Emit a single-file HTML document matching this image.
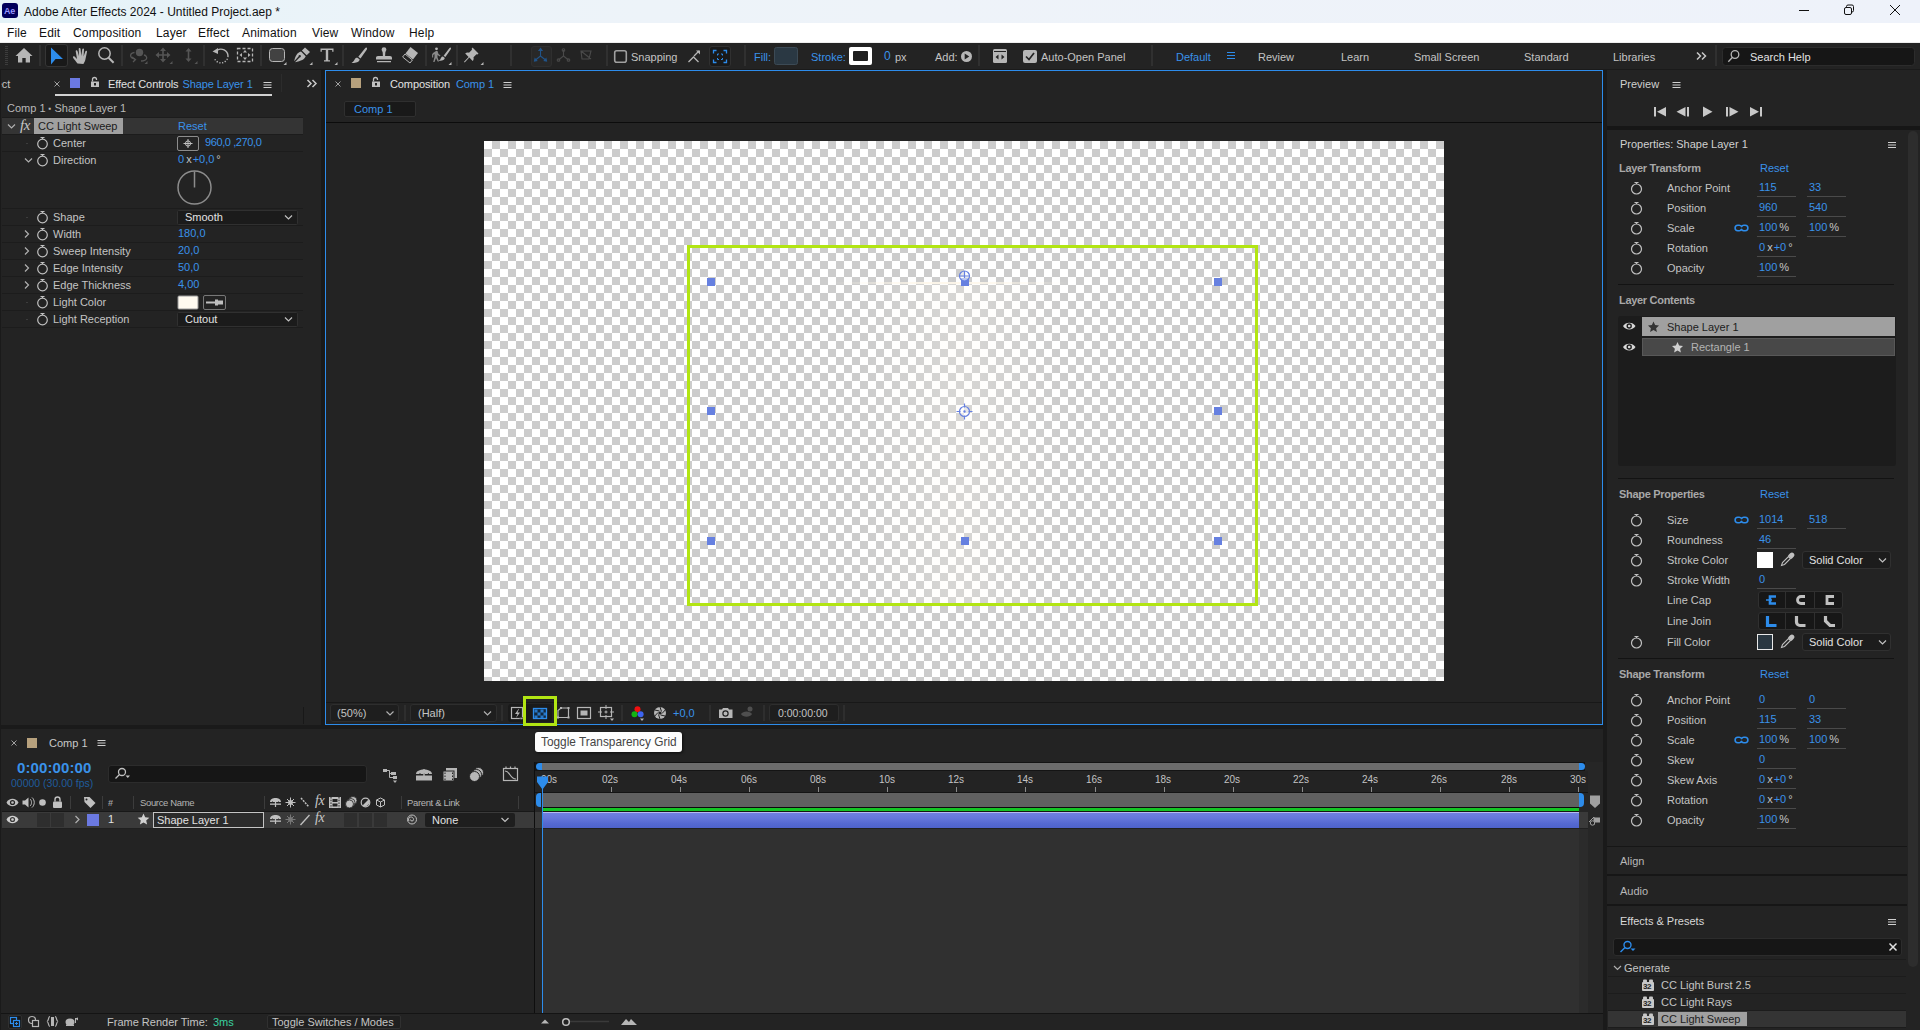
<!DOCTYPE html>
<html lang="en">
<head>
<meta charset="utf-8">
<title>Adobe After Effects 2024 - Untitled Project.aep *</title>
<style>
*{box-sizing:border-box;margin:0;padding:0}
html,body{width:1920px;height:1030px;overflow:hidden;background:#1a1a1a}
body{position:relative;font-family:"Liberation Sans",sans-serif;font-size:11px;color:#c4c4c4;line-height:14px;-webkit-font-smoothing:antialiased}
.a{position:absolute}
.t{position:absolute;white-space:nowrap;line-height:14px;height:14px}
.b{color:#3a92ea}
.w{color:#e2e2e2}
.pn{position:absolute;background:#232323}
svg{position:absolute;overflow:visible}
.ln{position:absolute;background:#1a1a1a;height:1px}
.sep{position:absolute;width:2px;background:#303030;top:45px;height:21px}
.sw{position:absolute;width:12px;height:12px}
.ul{position:absolute;height:1px;background:#4a4a4a}
.mn{top:26px;font-size:12px;color:#111;letter-spacing:0.15px}
.hd{width:8px;height:8px;background:#6680e0}

</style>
</head>
<body>
<!-- TITLEBAR -->
<div class="a" id="titlebar" style="left:0;top:0;width:1920px;height:23px;background:linear-gradient(90deg,#e4f3f8 0,#ecf3f9 400px,#eef3f9 900px,#eef2fa 1920px)"></div>
<div class="a" style="left:2px;top:3px;width:16px;height:15px;border-radius:3px;background:#00005b"></div>
<div class="t" style="left:4px;top:4px;font-size:9px;font-weight:bold;color:#9999ff;letter-spacing:-0.3px">Ae</div>
<div class="t" style="left:24px;top:5px;font-size:12px;color:#111">Adobe After Effects 2024 - Untitled Project.aep *</div>
<!-- MENUBAR -->
<div class="a" id="menubar" style="left:0;top:23px;width:1920px;height:20px;background:#fff"></div>
<div class="t mn" style="left:7px">File</div>
<div class="t mn" style="left:39px">Edit</div>
<div class="t mn" style="left:73px">Composition</div>
<div class="t mn" style="left:156px">Layer</div>
<div class="t mn" style="left:198px">Effect</div>
<div class="t mn" style="left:242px">Animation</div>
<div class="t mn" style="left:312px">View</div>
<div class="t mn" style="left:351px">Window</div>
<div class="t mn" style="left:409px">Help</div>
<svg style="left:0;top:0" width="1920" height="43" viewBox="0 0 1920 43" fill="none" stroke="#111" stroke-width="1">
<path d="M1799 10.5h10"/>
<rect x="1844.5" y="7.5" width="7" height="7" rx="1.5"/>
<path d="M1846.500 7.500v-1a1.500 1.500 0 0 1 1.500 -1.500h4a1.500 1.500 0 0 1 1.500 1.500v4a1.500 1.500 0 0 1 -1.500 1.500h-0.500"/>
<path d="M1890 5l10 10M1900 5l-10 10"/>
</svg>

<!-- TOOLBAR -->
<div class="pn" id="toolbar" style="left:0;top:43px;width:1920px;height:26px"></div>
<div class="a" style="left:45px;top:44px;width:23px;height:23px;background:#191919;border:1px solid #353535;border-radius:3px"></div>
<div class="a" style="left:531px;top:46px;width:21px;height:21px;background:#282828;border:1px solid #2f2f2f;border-radius:3px"></div>
<div class="a" style="left:709px;top:46px;width:22px;height:21px;background:#191919;border:1px solid #303030;border-radius:3px"></div>
<div class="sep" style="left:39px"></div><div class="sep" style="left:121px"></div><div class="sep" style="left:203px"></div><div class="sep" style="left:260px"></div><div class="sep" style="left:342px"></div><div class="sep" style="left:425px"></div><div class="sep" style="left:456px"></div><div class="sep" style="left:510px"></div><div class="sep" style="left:606px"></div><div class="sep" style="left:744px"></div><div class="sep" style="left:978px"></div><div class="sep" style="left:1151px"></div><div class="sep" style="left:1715px"></div>
<svg style="left:0;top:0" width="1920" height="70" viewBox="0 0 1920 70" fill="#b6b6b6" stroke="none">
<!-- grip -->
<g fill="#3c3c3c"><rect x="5" y="46" width="3" height="1"/><rect x="5" y="48" width="3" height="1"/><rect x="5" y="50" width="3" height="1"/><rect x="5" y="52" width="3" height="1"/><rect x="5" y="54" width="3" height="1"/><rect x="5" y="56" width="3" height="1"/><rect x="5" y="58" width="3" height="1"/><rect x="5" y="60" width="3" height="1"/><rect x="5" y="62" width="3" height="1"/><rect x="5" y="64" width="3" height="1"/></g>
<!-- home -->
<path d="M24 48l-8.500 8h2.500v6.500h4.300v-4.500h3.400v4.500h4.300v-6.500h2.500z"/>
<!-- selection arrow -->
<path d="M51 47.500v17l4.600 -5.600h7.400z" fill="#2d8ceb"/>
<!-- hand -->
<path d="M77.500 63.500c-1.500 -2 -3.600 -4.600 -4.400 -5.800c-.6 -1 .7 -1.900 1.700 -1l2.200 2.200l-1.300 -7.600c-.2 -1.300 1.500 -1.600 1.800 -.4l1.500 5.400l-.3 -7.300c0 -1.300 1.800 -1.300 1.900 0l.7 7l.9 -6.600c.2 -1.300 1.900 -1.100 1.800 .2l-.4 6.900l1.700 -5c.4 -1.200 2 -.7 1.700 .5l-1.600 7.600c-.4 1.700 -1 3 -2 4.400z"/>
<!-- zoom -->
<g fill="none" stroke="#b6b6b6" stroke-width="1.500"><circle cx="104.500" cy="53.500" r="5.700"/><path d="M108.600 57.800l5 5" stroke-width="2"/></g>
<!-- orbit (dim) -->
<g fill="#555" stroke="none"><circle cx="139.500" cy="52.500" r="3.700"/></g>
<g fill="none" stroke="#555" stroke-width="1.300"><path d="M134.500 52.500c-5 .5 -5.500 5.500 .5 6.500"/><path d="M144 55c4 1 4 6 -3 6"/><path d="M132 57l3.500 2.500l-2.500 2.500"/></g>
<path d="M147.500 61v3h-3z" fill="#555"/>
<!-- pan (dim) -->
<g fill="#555"><path d="M163 47.500l3 3.500h-2.200v3.200h3.200v-2.200l3.500 3l-3.500 3v-2.200h-3.200v3.200h2.200l-3 3.500l-3 -3.500h2.200v-3.200h-3.200v2.200l-3.500 -3l3.500 -3v2.200h3.200v-3.200h-2.200z"/><path d="M172.500 61v3h-3z"/></g>
<!-- dolly (dim) -->
<g fill="#555"><path d="M188.500 48l3 3.500h-2.200v7h2.200l-3 3.500l-3 -3.500h2.200v-7h-2.200z"/><path d="M197.500 61v3h-3z"/></g>
<!-- rotate -->
<g fill="none" stroke="#b6b6b6" stroke-width="1.400"><path d="M217 50.500a7 7 0 0 1 11 5.500"/><path d="M228 56a7 7 0 0 1 -13.500 2.500" stroke-dasharray="1.200 1.600"/></g>
<path d="M212.500 51.500l5.500 -3.500v6z"/>
<!-- pan behind -->
<g fill="none" stroke="#b6b6b6" stroke-width="1.300" stroke-dasharray="3 2"><rect x="237.500" y="48.500" width="15" height="13"/></g>
<path d="M245 50l2 2.500h-4zM245 60l2 -2.500h-4zM239.500 55l2.500 -2v4zM250.500 55l-2.500 -2v4z"/>
<!-- rect -->
<rect x="269.500" y="48.500" width="15" height="13" rx="3" fill="#424242" stroke="#b6b6b6" stroke-width="1"/>
<path d="M286.500 62v3h-3z"/>
<!-- pen -->
<path d="M305 47.500l5 4.500l-3.300 3.300l-4.800 -4.800zM301 51.500l4.700 4.700c-1 3 -4.500 4.800 -10.700 6l4.500 -4.800a1.200 1.200 0 1 0 -1 -1l-4.300 4.800c1.200 -5.500 3 -8.700 6.800 -9.700z"/>
<path d="M312.500 62v3h-3z"/>
<!-- T -->
<path d="M320.500 48.500h13v3.200h-1.300v-1.700h-4v10.200h1.800v1.300h-6v-1.300h1.800v-10.200h-4v1.700h-1.300z"/>
<path d="M337.500 62v3h-3z"/>
<!-- brush -->
<path d="M366.500 47.500c.8 .6 .6 1.500 .2 2.300l-6.200 8.700l-2.200 -1.700l6.800 -8.500c.4 -.6 .9 -1 1.400 -.8zM357.500 57.800l2.200 1.800c-.5 2.600 -3.700 3.800 -8.200 3.100c2.200 -.8 2.700 -2.300 3.400 -3.600c.6 -1.100 1.500 -1.500 2.600 -1.300z"/>
<!-- stamp -->
<path d="M384 47.200a2.400 2.400 0 0 1 2.400 2.400c0 1.200 -.9 1.800 -1.100 3l-.2 3.400h4.900c1.400 0 2 .7 2 2v1.500h-16v-1.500c0 -1.300 .6 -2 2 -2h4.900l-.2 -3.400c-.2 -1.200 -1.100 -1.800 -1.100 -3a2.400 2.400 0 0 1 2.400 -2.400zM377 61h14v1.300h-14z"/>
<!-- eraser -->
<path d="M410.500 47l7.500 6l-5 6.500l-7.500 -6z"/><path d="M405 54l7.400 6l-2.400 3l-7.400 -6z" fill="none" stroke="#b6b6b6" stroke-width="1"/>
<!-- roto -->
<circle cx="436.500" cy="48.800" r="1.400"/><path d="M433 53l3 -2h1.500l1 3l2 1.500l-.7 1l-2.300 -1.500v2.500l1.500 4h-1.300l-1.700 -3.500l-1.500 4h-1.300l1.300 -5v-3l-1.300 1v2.500h-1.100v-3z" fill="#8a8a8a"/>
<path d="M450.500 47.500c.8 .6 .5 1.400 .1 2.100l-5.200 7.500l-1.800 -1.400l5.700 -7.400c.4 -.5 .8 -.9 1.200 -.8zM443 56.500l1.800 1.500c-.4 2.200 -3 3.200 -6.300 2.600c1.700 -.6 2.100 -1.800 2.600 -2.900c.4 -.9 1.100 -1.300 1.900 -1.200z"/>
<path d="M451.500 62v3h-3z"/>
<!-- pin -->
<path d="M472.500 47.500l6 6l-1 1l-1 -.3l-3 3c.4 1.600 .1 2.800 -.8 3.800l-3.400 -3.400l-4.600 4.900l-.7 -.7l4.600 -4.900l-3.400 -3.400c1 -.9 2.200 -1.200 3.800 -.8l3 -3l-.3 -1z"/>
<path d="M483.500 62v3h-3z"/>
<!-- axis modes -->
<g fill="none" stroke="#21548a" stroke-width="1.100"><path d="M540.500 50v6l-5 4M540.500 56l5 4"/><path d="M540.500 48.500l-1.500 2h3zM534.500 61l.5 -2.400l1.700 2zM546.500 61l-.5 -2.400l-1.700 2z" fill="#21548a"/></g>
<g fill="none" stroke="#4a4a4a" stroke-width="1.100"><path d="M563.500 50v6l-5 4M563.500 56l5 4"/><circle cx="563.500" cy="50" r="1.300"/><circle cx="558.500" cy="60" r="1.300"/><circle cx="568.500" cy="60" r="1.300"/></g>
<g fill="none" stroke="#4a4a4a" stroke-width="1.100"><path d="M581 51h10l-2 8h-7z M581 51l10 8"/></g>
<!-- snapping checkbox -->
<rect x="614.700" y="50.700" width="11.600" height="11.600" rx="2" fill="#222" stroke="#a0a0a0" stroke-width="1.600"/>
<!-- snap icons -->
<g fill="none" stroke="#b6b6b6" stroke-width="1.300"><path d="M688.500 62l5 -5l5 5M694 56l5 -5"/><path d="M696 50.500h4v4z" fill="#b6b6b6" stroke="none"/></g>
<g fill="none" stroke="#2d8ceb" stroke-width="1.300"><path d="M713.500 53.500v-3h3M723.500 50.500h3v3M726.500 59.500v3h-3M716.500 62.500h-3v-3"/><path d="M717.500 55.500v-1.500h1.500M721 54h1.500v1.500M722.500 58v1.500h-1.500M719 59.500h-1.500v-1.500" stroke-width="1"/></g>
<!-- fill swatch -->
<rect x="774.500" y="47.500" width="23" height="17" rx="2" fill="#2a3843" stroke="#3c4a55" stroke-width="1"/>
<!-- stroke swatch -->
<rect x="849" y="47" width="23" height="18" rx="2" fill="#ffffff"/><rect x="853" y="51" width="15" height="10" rx="1" fill="#1e1e1e"/>
<!-- add -->
<circle cx="966.500" cy="56.500" r="5.500"/><path d="M964.700 53.500v6l4.600 -3z" fill="#232323"/>
<!-- panel icon -->
<rect x="993" y="49" width="14" height="14" rx="1.500"/><path d="M994 51.500h12" stroke="#232323" stroke-width="1"/><path d="M998.500 54.500v5l-3 -2.500zM1001.500 54.500v5l3 -2.500z" fill="#232323"/>
<!-- auto-open checkbox -->
<rect x="1023" y="50" width="14" height="13" rx="2"/><path d="M1026 56.500l3 3l5 -6.500" fill="none" stroke="#232323" stroke-width="1.700"/>
<!-- workspace menu -->
<path d="M1227 52.500h8M1227 55.500h8M1227 58.500h8" stroke="#2d8ceb" stroke-width="1.100"/>
<!-- chevrons -->
<path d="M1697 52.500l3.500 3.500l-3.500 3.500M1702 52.500l3.500 3.500l-3.500 3.500" fill="none" stroke="#c8c8c8" stroke-width="1.500"/>
<!-- search -->
<rect x="1722.500" y="47.500" width="192" height="18" rx="3" fill="#161616" stroke="#2c2c2c"/>
<g fill="none" stroke="#b6b6b6" stroke-width="1.300"><circle cx="1735" cy="54.500" r="3.800"/><path d="M1732.300 57.500l-4 4.300"/></g>
</svg>
<div class="t" style="left:631px;top:50px">Snapping</div>
<div class="t b" style="left:754px;top:50px">Fill:</div>
<div class="t b" style="left:811px;top:50px">Stroke:</div>
<div class="t b" style="left:884px;top:49px;font-size:12px">0</div>
<div class="t" style="left:895px;top:50px">px</div>
<div class="t" style="left:935px;top:50px">Add:</div>
<div class="t" style="left:1041px;top:50px">Auto-Open Panel</div>
<div class="t b" style="left:1176px;top:50px">Default</div>
<div class="t" style="left:1258px;top:50px">Review</div>
<div class="t" style="left:1341px;top:50px">Learn</div>
<div class="t" style="left:1414px;top:50px">Small Screen</div>
<div class="t" style="left:1524px;top:50px">Standard</div>
<div class="t" style="left:1613px;top:50px">Libraries</div>
<div class="t w" style="left:1750px;top:50px">Search Help</div>

<!-- LEFT PANEL -->
<div class="pn" id="leftp" style="left:0;top:70px;width:321px;height:655px"></div>
<div class="a" style="left:55px;top:94px;width:217px;height:2px;background:#d2d2d2"></div>
<div class="a" style="left:70px;top:78px;width:10px;height:10px;background:#6b79e1"></div>
<div class="a" style="left:281px;top:74px;width:1px;height:18px;background:#2c2c2c"></div>
<div class="a" style="left:2px;top:118px;width:301px;height:16px;background:#343434"></div>
<div class="a" style="left:34px;top:118px;width:89px;height:16px;background:#a0a0a0"></div>
<div class="ln" style="left:2px;top:117px;width:301px;background:#1c1c1c"></div>
<div class="ln" style="left:2px;top:134px;width:301px;background:#1c1c1c"></div>
<div class="ln" style="left:2px;top:151px;width:301px;background:#1c1c1c"></div>
<div class="ln" style="left:2px;top:208px;width:301px;background:#1c1c1c"></div>
<div class="ln" style="left:2px;top:225px;width:301px;background:#1c1c1c"></div>
<div class="ln" style="left:2px;top:242px;width:301px;background:#1c1c1c"></div>
<div class="ln" style="left:2px;top:259px;width:301px;background:#1c1c1c"></div>
<div class="ln" style="left:2px;top:276px;width:301px;background:#1c1c1c"></div>
<div class="ln" style="left:2px;top:293px;width:301px;background:#1c1c1c"></div>
<div class="ln" style="left:2px;top:310px;width:301px;background:#1c1c1c"></div>
<div class="ln" style="left:2px;top:327px;width:301px;background:#1c1c1c"></div>
<svg style="left:0;top:0" width="325" height="340" viewBox="0 0 325 340" fill="none" stroke="#c0c0c0" stroke-width="1.200">
<path d="M54.500 81.500l5 5M59.500 81.500l-5 5" stroke="#a0a0a0" stroke-width="1"/>
<rect x="91" y="81.500" width="8" height="5.500" fill="#c0c0c0" stroke="none"/><path d="M92.500 81.500v-2a2 2 0 0 1 4 0v0.500" stroke-width="1.300"/><rect x="94" y="83" width="2" height="2.500" fill="#232323" stroke="none"/>
<path d="M263.500 82.500h8M263.500 85h8M263.500 87.500h8" stroke="#d0d0d0" stroke-width="1.100"/>
<path d="M307.500 80l3.500 3.500l-3.500 3.500M312.500 80l3.500 3.500l-3.500 3.500" stroke="#c8c8c8" stroke-width="1.500"/>
<path d="M8 124.500l3.500 3.500l3.500 -3.500" stroke="#b0b0b0" stroke-width="1.200"/>
<circle cx="42.500" cy="144" r="4.800"/><path d="M40.500 137.5h4M42.500 137.5v1.500"/>
<rect x="26" y="143" width="2" height="1" fill="#3c3c3c" stroke="none"/>
<circle cx="42.500" cy="161" r="4.800"/><path d="M40.500 154.5h4M42.500 154.5v1.500"/>
<path d="M25 158.5l3.500 3.500l3.500 -3.500" stroke="#b0b0b0"/>
<circle cx="42.500" cy="218" r="4.800"/><path d="M40.500 211.5h4M42.500 211.5v1.500"/>
<rect x="26" y="217" width="2" height="1" fill="#3c3c3c" stroke="none"/>
<circle cx="42.500" cy="235" r="4.800"/><path d="M40.500 228.5h4M42.500 228.5v1.500"/>
<path d="M25 230.5l3.500 3.500l-3.500 3.500" stroke="#b0b0b0"/>
<circle cx="42.500" cy="252" r="4.800"/><path d="M40.500 245.5h4M42.500 245.5v1.500"/>
<path d="M25 247.5l3.500 3.500l-3.500 3.500" stroke="#b0b0b0"/>
<circle cx="42.500" cy="269" r="4.800"/><path d="M40.500 262.5h4M42.500 262.5v1.500"/>
<path d="M25 264.5l3.500 3.500l-3.500 3.500" stroke="#b0b0b0"/>
<circle cx="42.500" cy="286" r="4.800"/><path d="M40.500 279.5h4M42.500 279.5v1.500"/>
<path d="M25 281.5l3.500 3.500l-3.500 3.500" stroke="#b0b0b0"/>
<circle cx="42.500" cy="303" r="4.800"/><path d="M40.500 296.5h4M42.500 296.5v1.500"/>
<rect x="26" y="302" width="2" height="1" fill="#3c3c3c" stroke="none"/>
<circle cx="42.500" cy="320" r="4.800"/><path d="M40.500 313.5h4M42.500 313.5v1.500"/>
<rect x="26" y="319" width="2" height="1" fill="#3c3c3c" stroke="none"/>
<rect x="177.500" y="136.500" width="21" height="14" rx="1.500" stroke="#8c8c8c" stroke-width="1"/>
<circle cx="188" cy="143.500" r="2.600" stroke-width="1"/><path d="M188 139v9M183.500 143.500h9" stroke-width="1"/>
<circle cx="194.500" cy="187.500" r="16.500" stroke="#8c8c8c" stroke-width="1.500"/><path d="M194.500 187.500v-16" stroke="#8c8c8c" stroke-width="1.500"/>
<rect x="177.500" y="210.500" width="120" height="14" rx="1" fill="#1b1b1b" stroke="#303030" stroke-width="1"/>
<path d="M285 215.5l3.500 3.500l3.500 -3.500" stroke="#c0c0c0" stroke-width="1.200"/>
<rect x="177.500" y="312.500" width="120" height="14" rx="1" fill="#1b1b1b" stroke="#303030" stroke-width="1"/>
<path d="M285 317.5l3.500 3.500l3.500 -3.500" stroke="#c0c0c0" stroke-width="1.200"/>
<rect x="178" y="296" width="20" height="13" rx="1" fill="#fffaf0" stroke="#9a9a9a" stroke-width="1"/>
<rect x="203.500" y="295.500" width="22" height="14" rx="1.500" stroke="#777" stroke-width="1"/>
<path d="M206 302.500h9.500" stroke="#c0c0c0" stroke-width="2"/><path d="M215 299.500h3v6h-3zM218 300.500h5v4h-5z" fill="#c0c0c0" stroke="none"/>
</svg>

<div class="t" style="left:-24px;top:77px">Project</div>
<div class="t w" style="left:108px;top:77px;letter-spacing:-0.1px">Effect Controls <span class="b" style="margin-left:1px">Shape Layer 1</span></div>
<div class="t" style="left:7px;top:101px;color:#b9b9b9">Comp 1 <span style="font-size:8px;position:relative;top:-1px">&#9642;</span> Shape Layer 1</div>
<div class="t" style="left:38px;top:119px;color:#1a1a1a">CC Light Sweep</div>
<div class="t" style="left:20px;top:118px;font-family:'Liberation Serif',serif;font-style:italic;font-size:15px;color:#c8c8c8;letter-spacing:-0.5px">fx</div>
<div class="t b" style="left:178px;top:119px">Reset</div>
<div class="t" style="left:53px;top:136px">Center</div>
<div class="t" style="left:53px;top:153px">Direction</div>
<div class="t" style="left:53px;top:210px">Shape</div>
<div class="t" style="left:53px;top:227px">Width</div>
<div class="t" style="left:53px;top:244px">Sweep Intensity</div>
<div class="t" style="left:53px;top:261px">Edge Intensity</div>
<div class="t" style="left:53px;top:278px">Edge Thickness</div>
<div class="t" style="left:53px;top:295px">Light Color</div>
<div class="t" style="left:53px;top:312px">Light Reception</div>
<div class="t b" style="left:205px;top:135px;letter-spacing:-0.4px">960,0 ,270,0</div>
<div class="t b" style="left:178px;top:152px">0<span style="color:#c4c4c4;margin:0 1px 0 2px">x</span>+0,0<span style="color:#c4c4c4;margin-left:2px">°</span></div>
<div class="t w" style="left:185px;top:210px">Smooth</div>
<div class="t b" style="left:178px;top:226px">180,0</div>
<div class="t b" style="left:178px;top:243px">20,0</div>
<div class="t b" style="left:178px;top:260px">50,0</div>
<div class="t b" style="left:178px;top:277px">4,00</div>
<div class="t w" style="left:185px;top:312px">Cutout</div>

<!-- COMP PANEL -->
<div class="pn" id="compp" style="left:325px;top:70px;width:1278px;height:655px;border:1px solid #2d8ceb"></div>
<div class="a" style="left:326px;top:122px;width:1276px;height:1px;background:#0c0c0c"></div>
<div class="a" style="left:326px;top:702px;width:1276px;height:1px;background:#181818"></div>
<div class="a" style="left:326px;top:703px;width:1276px;height:21px;background:#232323"></div>
<div class="a" style="left:351px;top:78px;width:10px;height:10px;background:#b7a17d"></div>
<div class="a" style="left:344px;top:101px;width:72px;height:16px;background:#191919;border:1px solid #2f2f2f;border-radius:2px"></div>
<div class="a" id="canvas" style="left:484px;top:141px;width:960px;height:540px;background-color:#fff;background-image:conic-gradient(#ccc 25%,#fff 0 50%,#ccc 0 75%,#fff 0);background-size:16px 16px;background-position:0 0"></div>
<div class="a" style="left:832px;top:282px;width:236px;height:2px;background:linear-gradient(90deg,rgba(255,248,235,0),rgba(255,248,235,.9) 40%,rgba(255,248,235,.9) 60%,rgba(255,248,235,0))"></div>
<div class="a" style="left:860px;top:284px;width:200px;height:319px;background:linear-gradient(90deg,rgba(255,250,240,0),rgba(255,250,240,.22) 50%,rgba(255,250,240,0))"></div>
<div class="a" style="left:687px;top:245px;width:571px;height:361px;border:3px solid #b2e513"></div>
<div class="a hd" style="left:707px;top:278px"></div><div class="a hd" style="left:961px;top:278px"></div><div class="a hd" style="left:1214px;top:278px"></div>
<div class="a hd" style="left:707px;top:407px"></div><div class="a hd" style="left:1214px;top:407px"></div>
<div class="a hd" style="left:707px;top:537px"></div><div class="a hd" style="left:961px;top:537px"></div><div class="a hd" style="left:1214px;top:537px"></div>
<div class="a" style="left:330px;top:704px;width:69px;height:18px;background:#1e1e1e;border:1px solid #2e2e2e;border-radius:3px"></div>
<div class="a" style="left:410px;top:704px;width:87px;height:18px;background:#1e1e1e;border:1px solid #2e2e2e;border-radius:3px"></div>
<div class="a" style="left:508px;top:704px;width:44px;height:18px;background:#1a1a1a;border-radius:3px"></div>
<div class="a" style="left:769px;top:704px;width:70px;height:18px;background:#1e1e1e;border:1px solid #2e2e2e;border-radius:3px"></div>
<div class="sep" style="left:404px;top:705px;height:16px;background:#2e2e2e"></div><div class="sep" style="left:501px;top:705px;height:16px;background:#2e2e2e"></div><div class="sep" style="left:621px;top:705px;height:16px;background:#2e2e2e"></div><div class="sep" style="left:709px;top:705px;height:16px;background:#2e2e2e"></div><div class="sep" style="left:763px;top:705px;height:16px;background:#2e2e2e"></div><div class="sep" style="left:843px;top:705px;height:16px;background:#2e2e2e"></div>
<svg style="left:0;top:0" width="1610" height="730" viewBox="0 0 1610 730" fill="none" stroke="#c0c0c0" stroke-width="1.200">
<path d="M335.500 81.500l5 5M340.500 81.500l-5 5" stroke="#a0a0a0" stroke-width="1"/>
<rect x="372" y="81.500" width="8" height="5.500" fill="#c0c0c0" stroke="none"/><path d="M373.500 81.500v-2a2 2 0 0 1 4 0v0.500" stroke-width="1.300"/><rect x="375" y="83" width="2" height="2.500" fill="#232323" stroke="none"/>
<path d="M503.500 82.500h8M503.500 85h8M503.500 87.500h8" stroke="#d0d0d0" stroke-width="1.100"/>
<!-- anchor / center icons -->
<g stroke="#6680e0" stroke-width="1.200"><circle cx="964.500" cy="276" r="5" fill="rgba(255,255,255,.55)"/><path d="M964.500 271v7M959.500 276h10"/></g>
<g stroke="#6680e0" stroke-width="1.200"><circle cx="964.500" cy="411.500" r="5" fill="rgba(255,255,255,.45)"/><path d="M964.500 403.500v4M964.500 415.500v4M956.500 411.500h4M968.500 411.500h4"/><circle cx="964.500" cy="411.500" r=".6" fill="#6680e0"/></g>
<!-- bottom bar icons -->
<path d="M386.500 711.500l3.500 3.500l3.500 -3.500M484 711.500l3.500 3.500l3.500 -3.500" stroke="#b0b0b0" stroke-width="1.200"/>
<rect x="511.500" y="707.500" width="11" height="11" stroke="#b6b6b6" stroke-width="1.200" /><path d="M518.500 709l-3.500 5h2.500l-1.500 4l4 -5.500h-2.500l1.500 -3.500z" fill="#b6b6b6" stroke="none"/><path d="M523 717.500l-1.800 2.500l-1.800 -2.500z" fill="#b6b6b6" stroke="#1a1a1a" stroke-width=".5"/>
<rect x="533.500" y="708.500" width="13" height="10" fill="#12283e" stroke="#2d8ceb" stroke-width="1.300"/><path d="M534.500 709.500h3v3h-3zM540.500 709.500h3v3h-3zM537.500 712.500h3v3h-3zM543.500 712.500h2.500v3h-2.500zM534.500 715.500h3v2.500h-3zM540.500 715.500h3v2.500h-3z" fill="#2878c8" stroke="none"/>
<path d="M558 717.500v-7l3 -2.500h7.500v9.500z" stroke="#b6b6b6" stroke-width="1.200"/><g fill="#b6b6b6" stroke="none"><rect x="560" y="707" width="2" height="2"/><rect x="567.500" y="707" width="2" height="2"/><rect x="567.500" y="716.500" width="2" height="2"/><rect x="557" y="716.500" width="2" height="2"/></g>
<rect x="577.500" y="707.500" width="13" height="11" stroke="#b6b6b6" stroke-width="1.200"/><rect x="580.500" y="710.500" width="7" height="5" fill="#b6b6b6" stroke="none"/>
<rect x="600.500" y="707.500" width="11" height="9" stroke="#b6b6b6" stroke-width="1.200"/><path d="M606 705v4M606 715v4M598 712h4M610 712h4M604.500 712h3M606 710.500v3" stroke="#b6b6b6" stroke-width="1"/><path d="M610 718.500h4l-2 2.500z" fill="#b6b6b6" stroke="none"/>
<circle cx="637.500" cy="709.300" r="3" fill="#f01010" stroke="none"/><circle cx="634.500" cy="714.300" r="3" fill="#14b414" stroke="none"/><circle cx="640.600" cy="714.300" r="3" fill="#3c64f0" stroke="none"/><path d="M640 718.500h4l-2 2.500z" fill="#b6b6b6" stroke="none"/>
<circle cx="660" cy="713" r="6" fill="#b6b6b6" stroke="none"/><circle cx="660" cy="713" r="1.600" fill="#232323" stroke="none"/><path d="M660 707l1.500 4.500M665.200 710l-3.200 3.500M665.200 716l-4.600 -1M660 719l-1.500 -4.500M654.800 716l3.200 -3.500M654.800 710l4.600 1" stroke="#232323" stroke-width="1"/>
<path d="M719 709.500h3l1 -1.500h5l1 1.500h3.500v8.500h-13.500z" fill="#b6b6b6" stroke="none"/><circle cx="725.500" cy="713.500" r="2.600" fill="#b6b6b6" stroke="#202020" stroke-width="1.200"/>
<g opacity=".3"><path d="M741 714c2 -3.500 9 -3.500 11 0c-2 3.500 -9 3.500 -11 0z" fill="#b6b6b6" stroke="none"/><circle cx="750" cy="709" r="2.500" fill="#b6b6b6" stroke="none"/></g>
</svg>
<div class="a" style="left:523px;top:696px;width:34px;height:30px;border:3px solid #b2e513"></div>
<div class="t w" style="left:390px;top:77px;letter-spacing:-0.1px">Composition <span class="b" style="margin-left:3px">Comp 1</span></div>
<div class="t b" style="left:354px;top:102px">Comp 1</div>
<div class="t" style="left:337px;top:706px">(50%)</div>
<div class="t" style="left:418px;top:706px">(Half)</div>
<div class="t b" style="left:673px;top:706px">+0,0</div>
<div class="t" style="left:778px;top:706px;font-size:10.500px">0:00:00:00</div>

<!-- TIMELINE -->
<div class="pn" id="tlp" style="left:0;top:729px;width:1603px;height:301px"></div>
<div class="a" style="left:535px;top:762px;width:1068px;height:251px;background:#262626"></div>
<div class="a" style="left:542px;top:828px;width:1037px;height:185px;background:#303030"></div>
<div class="a" style="left:1579px;top:812px;width:9px;height:201px;background:#2b2b2b"></div>
<div class="a" style="left:534px;top:762px;width:1px;height:251px;background:#0e0e0e"></div>
<div class="a" style="left:535px;top:762px;width:1050px;height:9px;background:#141414"></div><div class="a" style="left:542px;top:763px;width:1037px;height:7px;background:#6c6c6c"></div>
<div class="a" style="left:536px;top:763px;width:6px;height:7px;background:#2d8ceb;border-radius:4px 0 0 4px"></div>
<div class="a" style="left:1579px;top:763px;width:6px;height:7px;background:#2d8ceb;border-radius:0 4px 4px 0"></div>
<div class="a" style="left:535px;top:771px;width:1053px;height:21px;background:#232323"></div>
<div class="a" style="left:542px;top:787px;width:1px;height:5px;background:#8c8c8c"></div>
<div class="t" style="left:541px;top:773px;font-size:10px">00s</div>
<div class="a" style="left:611px;top:787px;width:1px;height:5px;background:#8c8c8c"></div>
<div class="t" style="left:590px;top:773px;width:40px;text-align:center;font-size:10px">02s</div>
<div class="a" style="left:680px;top:787px;width:1px;height:5px;background:#8c8c8c"></div>
<div class="t" style="left:659px;top:773px;width:40px;text-align:center;font-size:10px">04s</div>
<div class="a" style="left:749px;top:787px;width:1px;height:5px;background:#8c8c8c"></div>
<div class="t" style="left:729px;top:773px;width:40px;text-align:center;font-size:10px">06s</div>
<div class="a" style="left:818px;top:787px;width:1px;height:5px;background:#8c8c8c"></div>
<div class="t" style="left:798px;top:773px;width:40px;text-align:center;font-size:10px">08s</div>
<div class="a" style="left:887px;top:787px;width:1px;height:5px;background:#8c8c8c"></div>
<div class="t" style="left:867px;top:773px;width:40px;text-align:center;font-size:10px">10s</div>
<div class="a" style="left:956px;top:787px;width:1px;height:5px;background:#8c8c8c"></div>
<div class="t" style="left:936px;top:773px;width:40px;text-align:center;font-size:10px">12s</div>
<div class="a" style="left:1025px;top:787px;width:1px;height:5px;background:#8c8c8c"></div>
<div class="t" style="left:1005px;top:773px;width:40px;text-align:center;font-size:10px">14s</div>
<div class="a" style="left:1095px;top:787px;width:1px;height:5px;background:#8c8c8c"></div>
<div class="t" style="left:1074px;top:773px;width:40px;text-align:center;font-size:10px">16s</div>
<div class="a" style="left:1164px;top:787px;width:1px;height:5px;background:#8c8c8c"></div>
<div class="t" style="left:1143px;top:773px;width:40px;text-align:center;font-size:10px">18s</div>
<div class="a" style="left:1233px;top:787px;width:1px;height:5px;background:#8c8c8c"></div>
<div class="t" style="left:1212px;top:773px;width:40px;text-align:center;font-size:10px">20s</div>
<div class="a" style="left:1302px;top:787px;width:1px;height:5px;background:#8c8c8c"></div>
<div class="t" style="left:1281px;top:773px;width:40px;text-align:center;font-size:10px">22s</div>
<div class="a" style="left:1371px;top:787px;width:1px;height:5px;background:#8c8c8c"></div>
<div class="t" style="left:1350px;top:773px;width:40px;text-align:center;font-size:10px">24s</div>
<div class="a" style="left:1440px;top:787px;width:1px;height:5px;background:#8c8c8c"></div>
<div class="t" style="left:1419px;top:773px;width:40px;text-align:center;font-size:10px">26s</div>
<div class="a" style="left:1509px;top:787px;width:1px;height:5px;background:#8c8c8c"></div>
<div class="t" style="left:1489px;top:773px;width:40px;text-align:center;font-size:10px">28s</div>
<div class="a" style="left:1578px;top:787px;width:1px;height:5px;background:#8c8c8c"></div>
<div class="t" style="left:1558px;top:773px;width:40px;text-align:center;font-size:10px">30s</div>
<div class="a" style="left:535px;top:792px;width:1053px;height:1px;background:#141414"></div><div class="a" style="left:542px;top:793px;width:1037px;height:14px;background:#606060"></div>
<div class="a" style="left:536px;top:793px;width:5px;height:14px;background:#2d8ceb;border-radius:4px 0 0 4px"></div>
<div class="a" style="left:1579px;top:793px;width:5px;height:14px;background:#2d8ceb;border-radius:0 4px 4px 0"></div>
<div class="a" style="left:542px;top:807px;width:1037px;height:5px;background:#14c424;border-top:1px solid #0a0a0a;border-bottom:1px solid #151515"></div>
<div class="a" style="left:535px;top:812px;width:7px;height:16px;background:#3a3a3a"></div>
<div class="a" style="left:542px;top:812px;width:1037px;height:16px;background:linear-gradient(#b4bcf0 0,#b4bcf0 1px,#6e80e0 1px,#6577da 6px,#5468d0 12px,#4e62ca 16px)"></div>
<div class="a" style="left:1579px;top:812px;width:9px;height:16px;background:#3a3a3a"></div>
<div class="a" style="left:2px;top:812px;width:532px;height:16px;background:#3a3a3a"></div>
<div class="a" style="left:2px;top:811px;width:532px;height:1px;background:#181818"></div>
<div class="a" style="left:2px;top:828px;width:1586px;height:1px;background:#202020"></div>
<div class="a" style="left:27px;top:738px;width:10px;height:10px;background:#b7a17d"></div>
<div class="a" style="left:108px;top:765px;width:259px;height:18px;background:#161616;border:1px solid #2c2c2c;border-radius:3px"></div>
<div class="a" style="left:70px;top:796px;width:1px;height:13px;background:#3c3c3c"></div>
<div class="a" style="left:102px;top:796px;width:1px;height:13px;background:#3c3c3c"></div>
<div class="a" style="left:133px;top:796px;width:1px;height:13px;background:#3c3c3c"></div>
<div class="a" style="left:264px;top:796px;width:1px;height:13px;background:#3c3c3c"></div>
<div class="a" style="left:401px;top:796px;width:1px;height:13px;background:#3c3c3c"></div>
<div class="a" style="left:518px;top:796px;width:1px;height:13px;background:#3c3c3c"></div>
<div class="a" style="left:37px;top:813px;width:13px;height:14px;background:#2e2e2e"></div>
<div class="a" style="left:51px;top:813px;width:13px;height:14px;background:#2e2e2e"></div>
<div class="a" style="left:344px;top:813px;width:13px;height:14px;background:#2e2e2e"></div>
<div class="a" style="left:359px;top:813px;width:13px;height:14px;background:#2e2e2e"></div>
<div class="a" style="left:374px;top:813px;width:13px;height:14px;background:#2e2e2e"></div>
<div class="a" style="left:87px;top:814px;width:12px;height:12px;background:#6b79e1"></div>
<div class="a" style="left:153px;top:812px;width:111px;height:16px;background:#2b2b2b;border:1px solid #c4c4c4"></div>
<div class="a" style="left:425px;top:813px;width:90px;height:14px;background:#1e1e1e;border-radius:2px"></div>
<div class="a" style="left:0;top:1013px;width:1603px;height:1px;background:#141414"></div>
<div class="a" style="left:267px;top:1015px;width:134px;height:14px;background:#1f1f1f;border:1px solid #303030;border-radius:2px"></div>
<div class="a" style="left:8px;top:1015px;width:14px;height:14px;background:#191919;border:1px solid #303030;border-radius:2px"></div>
<div class="a" style="left:542px;top:780px;width:1px;height:233px;background:#2d8ceb"></div>
<svg style="left:0;top:0" width="1610" height="1030" viewBox="0 0 1610 1030" fill="none" stroke="#c0c0c0" stroke-width="1.200">
<path d="M11.500 740.500l5 5M16.500 740.500l-5 5" stroke="#a0a0a0" stroke-width="1"/>
<path d="M97.500 740.500h8M97.500 743h8M97.500 745.500h8" stroke="#d0d0d0" stroke-width="1.100"/>
<g stroke="#c0c0c0" stroke-width="1.300"><circle cx="122" cy="772" r="3.500"/><path d="M119.500 774.500l-4 4"/></g><path d="M125.500 775.500h4.500l-2.200 2.500z" fill="#c0c0c0" stroke="none"/>
<!-- tl icons -->
<g fill="#b6b6b6" stroke="none"><rect x="383" y="769" width="4" height="3"/><rect x="391" y="772" width="5" height="3"/><rect x="393" y="776" width="4" height="3"/><path d="M393 780.500h4l-2 2.500z"/></g><path d="M387 770.500h2.500v7h4M389.500 773.500h2" stroke="#b6b6b6" stroke-width="1"/>
<g fill="#b6b6b6" stroke="none"><path d="M416 774c0 -6 16 -6 16 0h-3c0 -1.500 -1.200 -1.500 -1.200 0h-3c0 -1.500 -1.200 -1.500 -1.200 0h-3c0 -1.500 -1.200 -1.500 -1.200 0z"/><rect x="416" y="775.500" width="16" height="5"/><rect x="423.300" y="769" width="1.400" height="7"/></g>
<g fill="#b6b6b6" stroke="none"><rect x="446" y="768" width="11" height="10"/><rect x="443" y="771" width="11" height="10" stroke="#262626" stroke-width="1"/></g><path d="M445 772.500v8M452.500 772.500v8" stroke="#262626" stroke-width="1" stroke-dasharray="1.500 1.500"/>
<g fill="#b6b6b6" stroke="#262626" stroke-width="1"><circle cx="478.500" cy="772.500" r="5"/><circle cx="476.500" cy="774.500" r="5"/><circle cx="474.500" cy="776.500" r="5"/></g>
<rect x="503.500" y="768.500" width="14" height="12" stroke="#b6b6b6" stroke-width="1.200"/><path d="M505 771c5 0 5 8 11 8" stroke="#b6b6b6" stroke-width="1.200"/><path d="M506 766.500v2M510.500 766.500v2M515 766.500v2" stroke="#b6b6b6" stroke-width="1.200"/>
<!-- column header icons -->
<g id="eye"><path d="M6.500 802.500c2.500 -5 9.500 -5 12 0c-2.500 5 -9.500 5 -12 0z" fill="#c0c0c0" stroke="none"/><circle cx="12.500" cy="802.500" r="2.600" fill="#232323" stroke="none"/><circle cx="12.500" cy="802.500" r="1.300" fill="#c0c0c0" stroke="none"/></g>
<path d="M22.500 800.500h2.500l3.500 -3v10l-3.500 -3h-2.500z" fill="#c0c0c0" stroke="none"/><path d="M30 799c2 1.500 2 5.500 0 7M32 797.500c3 2.500 3 7.500 0 10" stroke-width="1"/>
<circle cx="42.500" cy="802.500" r="3.300" fill="#c0c0c0" stroke="none"/>
<rect x="53" y="801.500" width="9" height="6.500" rx="1" fill="#c0c0c0" stroke="none"/><path d="M55 801.500v-2a2.500 2.500 0 0 1 5 0v2" stroke-width="1.400"/>
<path d="M84 797h5.500l6 6l-5 5l-6 -6z" fill="#c0c0c0" stroke="none"/><circle cx="86.500" cy="799.500" r="1" fill="#232323" stroke="none"/>
<!-- switches header -->
<g fill="#c0c0c0" stroke="none"><path d="M270 802c0 -5.500 11 -5.500 11 0h-2c0 -1 -1 -1 -1 0h-2c0 -1 -1 -1 -1 0h-2c0 -1 -1 -1 -1 0z"/><rect x="270" y="803.500" width="11" height="1.300"/><rect x="274.900" y="798" width="1.200" height="9"/></g>
<g stroke="#c0c0c0" stroke-width="1"><circle cx="290.500" cy="802.500" r="2" fill="#c0c0c0"/><path d="M290.500 797.500v10M285.500 802.500h10M287 799l7 7M294 799l-7 7"/></g>
<path d="M301 798l8 9" stroke-width="1.500" stroke-dasharray="2 1"/>
<g fill="#c0c0c0" stroke="none"><rect x="329" y="797" width="12" height="11"/></g><path d="M331 797v11M339 797v11" stroke="#232323" stroke-width="1" stroke-dasharray="1.500 1.200"/><rect x="332.500" y="799" width="5" height="3" fill="#232323" stroke="none"/><rect x="332.500" y="803.500" width="5" height="3" fill="#232323" stroke="none"/>
<g fill="#c0c0c0" stroke="#232323" stroke-width=".8"><circle cx="353" cy="800.500" r="4"/><circle cx="351" cy="802.500" r="4"/><circle cx="349.500" cy="804" r="4"/></g>
<circle cx="365.500" cy="802.500" r="4.300" stroke-width="1.200"/><path d="M362.500 805.500a4.300 4.300 0 0 0 6 -6z" fill="#c0c0c0" stroke="none"/>
<path d="M380.500 798l4 2v5l-4 2l-4 -2v-5zM376.500 800l4 2l4 -2M380.500 802v5" stroke-width="1"/>
<!-- layer row icons -->
<g><path d="M6.500 819.500c2.500 -5 9.500 -5 12 0c-2.500 5 -9.500 5 -12 0z" fill="#d0d0d0" stroke="none"/><circle cx="12.500" cy="819.500" r="2.600" fill="#3a3a3a" stroke="none"/><circle cx="12.500" cy="819.500" r="1.300" fill="#d0d0d0" stroke="none"/></g>
<path d="M75.500 816l3.500 3.500l-3.500 3.500" stroke="#b0b0b0"/>
<path d="M143.500 813.500l1.700 3.800l4.100 .4l-3.100 2.800l.9 4.100l-3.600 -2.200l-3.600 2.200l.9 -4.100l-3.100 -2.800l4.100 -.4z" fill="#d0d0d0" stroke="none"/>
<g fill="#c0c0c0" stroke="none"><path d="M270 819c0 -5.500 11 -5.500 11 0h-2c0 -1 -1 -1 -1 0h-2c0 -1 -1 -1 -1 0h-2c0 -1 -1 -1 -1 0z"/><rect x="270" y="820.500" width="11" height="1.300"/><rect x="274.900" y="815" width="1.200" height="9"/></g>
<g stroke="#777" stroke-width="1"><circle cx="290.500" cy="819.500" r="2" fill="#777"/><path d="M290.500 814.500v10M285.500 819.500h10M287 816l7 7M294 816l-7 7"/></g>
<path d="M300.500 825l9 -10" stroke-width="1.300"/>
<circle cx="412" cy="819.500" r="4.500" stroke-width="1"/><path d="M412 819.500m-1.500 0a1.500 1.500 0 1 0 3 0a2.500 2.500 0 1 0 -4.500 1.500" stroke-width="1"/>
<path d="M501.500 818l3.500 3.500l3.500 -3.500" stroke-width="1.200"/>
<!-- playhead head -->
<path d="M537 776.500h11v5.500l-5.500 7.500l-5.500 -7.500z" fill="#2d8ceb" stroke="none"/>
<!-- right markers -->
<path d="M1590 795.500h10v8l-5 4.500l-5 -4.500z" fill="#a0a0a0" stroke="none"/>
<path d="M1594 817.500h6v5h-6z" fill="#a0a0a0" stroke="none"/><path d="M1589 822l5 -5v8" stroke="#a0a0a0" stroke-width="1"/><circle cx="1592.500" cy="823" r="2.200" stroke="#a0a0a0" fill="#262626" stroke-width="1"/>
<!-- status icons -->
<g stroke="#2d8ceb" stroke-width="1.200"><rect x="10.500" y="1017.500" width="6" height="6"/><rect x="13.500" y="1020.500" width="6" height="6" fill="#191919"/><path d="M15 1023.500h3M16.500 1022v3" stroke-width="1"/></g>
<g stroke="#b6b6b6" stroke-width="1.200"><circle cx="32" cy="1020" r="3.500"/><rect x="32.500" y="1020.500" width="6" height="6" fill="#232323"/></g>
<g stroke="#b6b6b6" stroke-width="1.200"><path d="M50 1016.500c-2 0 -1 4.500 -3 5c2 .5 1 5 3 5M55 1016.500c2 0 1 4.500 3 5c-2 .5 -1 5 -3 5"/><rect x="51" y="1017" width="3" height="9" fill="#b6b6b6" stroke="none"/></g>
<g fill="#b6b6b6" stroke="none"><ellipse cx="70" cy="1022" rx="4.500" ry="3.500"/><rect x="66" y="1024.500" width="8" height="1.500"/><path d="M75 1018.500l3 -1v3z"/></g><path d="M75.500 1018v5" stroke="#b6b6b6" stroke-width="1"/>
<path d="M541 1023.500l4 -4l4 4z" fill="#b6b6b6" stroke="none"/>
<path d="M569 1021.500h40" stroke="#3a3a3a" stroke-width="1.500"/><circle cx="566" cy="1022" r="3.300" stroke="#c0c0c0" stroke-width="1.500" fill="#232323"/>
<path d="M621 1025l5 -6l3 3l2 -3l6 6z" fill="#b6b6b6" stroke="none"/>
</svg>
<div class="t" style="left:49px;top:736px;color:#c8c8c8">Comp 1</div>
<div class="t b" style="left:17px;top:760px;font-size:15px;line-height:16px;height:16px;font-weight:bold;letter-spacing:0.1px">0:00:00:00</div>
<div class="t" style="left:11px;top:776px;color:#1f5c9c;font-size:10.500px">00000 (30.00 fps)</div>
<div class="t" style="left:108px;top:796px;font-size:9px;font-weight:bold;color:#a0a0a0">#</div>
<div class="t" style="left:140px;top:796px;font-size:9.500px;letter-spacing:-0.35px;color:#b4b4b4">Source Name</div>
<div class="t" style="left:407px;top:796px;font-size:9.500px;letter-spacing:-0.35px;color:#b4b4b4">Parent &amp; Link</div>
<div class="t" style="left:315px;top:794px;font-family:'Liberation Serif',serif;font-style:italic;font-size:14px;color:#c8c8c8;letter-spacing:-0.5px">fx</div>
<div class="t" style="left:315px;top:811px;font-family:'Liberation Serif',serif;font-style:italic;font-size:14px;color:#c8c8c8;letter-spacing:-0.5px">fx</div>
<div class="t w" style="left:108px;top:812px">1</div>
<div class="t w" style="left:157px;top:813px">Shape Layer 1</div>
<div class="t w" style="left:432px;top:813px">None</div>
<div class="t" style="left:107px;top:1015px">Frame Render Time:</div>
<div class="t" style="left:213px;top:1015px;color:#3ad0a0">3ms</div>
<div class="t" style="left:272px;top:1015px">Toggle Switches / Modes</div>

<!-- RIGHT -->
<div class="pn" id="rightp" style="left:1607px;top:70px;width:313px;height:960px"></div>
<div class="a" style="left:1607px;top:126px;width:313px;height:4px;background:#161616"></div>
<div class="a" style="left:1607px;top:846px;width:300px;height:1px;background:#161616"></div>
<div class="a" style="left:1607px;top:874px;width:300px;height:2px;background:#161616"></div>
<div class="a" style="left:1607px;top:904px;width:300px;height:2px;background:#161616"></div>
<div class="a" style="left:1908px;top:131px;width:10px;height:836px;background:#2d2d2d;border-radius:5px"></div>
<div class="a" style="left:1618px;top:284px;width:276px;height:1px;background:#131313"></div>
<div class="a" style="left:1618px;top:478px;width:276px;height:1px;background:#131313"></div>
<div class="a" style="left:1618px;top:658px;width:276px;height:1px;background:#131313"></div>
<div class="a" style="left:1618px;top:316px;width:278px;height:150px;background:#1c1c1c;border-radius:3px"></div>
<div class="a" style="left:1642px;top:317px;width:253px;height:19px;background:#a0a0a0"></div>
<div class="a" style="left:1642px;top:338px;width:253px;height:18px;background:#484848;border:1px solid #585858"></div>
<div class="ul" style="left:1757px;top:196px;width:39px"></div>
<div class="ul" style="left:1807px;top:196px;width:39px"></div>
<div class="ul" style="left:1757px;top:216px;width:39px"></div>
<div class="ul" style="left:1807px;top:216px;width:39px"></div>
<div class="ul" style="left:1757px;top:236px;width:39px"></div>
<div class="ul" style="left:1807px;top:236px;width:39px"></div>
<div class="ul" style="left:1757px;top:256px;width:39px"></div>
<div class="ul" style="left:1757px;top:276px;width:39px"></div>
<div class="ul" style="left:1757px;top:528px;width:39px"></div>
<div class="ul" style="left:1807px;top:528px;width:39px"></div>
<div class="ul" style="left:1757px;top:548px;width:39px"></div>
<div class="ul" style="left:1757px;top:588px;width:39px"></div>
<div class="ul" style="left:1757px;top:708px;width:39px"></div>
<div class="ul" style="left:1807px;top:708px;width:39px"></div>
<div class="ul" style="left:1757px;top:728px;width:39px"></div>
<div class="ul" style="left:1807px;top:728px;width:39px"></div>
<div class="ul" style="left:1757px;top:748px;width:39px"></div>
<div class="ul" style="left:1807px;top:748px;width:39px"></div>
<div class="ul" style="left:1757px;top:768px;width:39px"></div>
<div class="ul" style="left:1757px;top:788px;width:39px"></div>
<div class="ul" style="left:1757px;top:808px;width:39px"></div>
<div class="ul" style="left:1757px;top:828px;width:39px"></div>
<div class="a" style="left:1613px;top:938px;width:289px;height:18px;background:#161616;border:1px solid #2c2c2c;border-radius:3px"></div>
<div class="ln" style="left:1608px;top:959px;width:298px;background:#1c1c1c"></div>
<div class="ln" style="left:1608px;top:976px;width:298px;background:#1c1c1c"></div>
<div class="ln" style="left:1608px;top:993px;width:298px;background:#1c1c1c"></div>
<div class="ln" style="left:1608px;top:1010px;width:298px;background:#1c1c1c"></div>
<div class="ln" style="left:1608px;top:1027px;width:298px;background:#1c1c1c"></div>
<div class="a" style="left:1608px;top:1011px;width:298px;height:16px;background:#343434"></div>
<div class="a" style="left:1658px;top:1012px;width:89px;height:14px;background:#a0a0a0"></div>
<div class="a" style="left:1757px;top:552px;width:16px;height:16px;background:#fff"></div>
<div class="a" style="left:1757px;top:634px;width:16px;height:16px;background:#2a3741;border:1px solid #e8e8e8"></div>
<div class="a" style="left:1802px;top:551px;width:89px;height:18px;background:#1c1c1c;border:1px solid #303030;border-radius:3px"></div>
<div class="a" style="left:1802px;top:633px;width:89px;height:18px;background:#1c1c1c;border:1px solid #303030;border-radius:3px"></div>
<div class="a" style="left:1758px;top:591px;width:85px;height:18px;background:#171717;border:1px solid #303030;border-radius:3px"></div>
<div class="a" style="left:1785px;top:591px;width:1px;height:18px;background:#303030"></div>
<div class="a" style="left:1814px;top:591px;width:1px;height:18px;background:#303030"></div>
<div class="a" style="left:1758px;top:612px;width:85px;height:18px;background:#171717;border:1px solid #303030;border-radius:3px"></div>
<div class="a" style="left:1785px;top:612px;width:1px;height:18px;background:#303030"></div>
<div class="a" style="left:1814px;top:612px;width:1px;height:18px;background:#303030"></div>
<svg style="left:0;top:0" width="1920" height="1030" viewBox="0 0 1920 1030" fill="none" stroke="#c0c0c0" stroke-width="1.200">
<circle cx="1636.500" cy="189" r="5"/><path d="M1634.500 182.5h4M1636.500 182.5v1.500"/>
<circle cx="1636.500" cy="209" r="5"/><path d="M1634.500 202.5h4M1636.500 202.5v1.500"/>
<circle cx="1636.500" cy="229" r="5"/><path d="M1634.500 222.5h4M1636.500 222.5v1.500"/>
<g stroke="#2d8ceb" stroke-width="1.600" transform="translate(0 225.20000000000002)"><path d="M1741.500 4.200a2.600 2.600 0 0 1 -2.300 1.300h-1.400a2.700 2.700 0 0 1 0 -5.400h1.400a2.600 2.600 0 0 1 2.600 2"/><path d="M1741.500 1.400a2.600 2.600 0 0 1 2.300 -1.300h1.400a2.700 2.700 0 0 1 0 5.400h-1.400a2.600 2.600 0 0 1 -2.600 -2"/></g>
<circle cx="1636.500" cy="249" r="5"/><path d="M1634.500 242.5h4M1636.500 242.5v1.500"/>
<circle cx="1636.500" cy="269" r="5"/><path d="M1634.500 262.5h4M1636.500 262.5v1.500"/>
<circle cx="1636.500" cy="521" r="5"/><path d="M1634.500 514.5h4M1636.500 514.5v1.500"/>
<g stroke="#2d8ceb" stroke-width="1.600" transform="translate(0 517.1999999999999)"><path d="M1741.500 4.200a2.600 2.600 0 0 1 -2.300 1.300h-1.400a2.700 2.700 0 0 1 0 -5.400h1.400a2.600 2.600 0 0 1 2.600 2"/><path d="M1741.500 1.400a2.600 2.600 0 0 1 2.300 -1.300h1.400a2.700 2.700 0 0 1 0 5.400h-1.400a2.600 2.600 0 0 1 -2.600 -2"/></g>
<circle cx="1636.500" cy="541" r="5"/><path d="M1634.500 534.5h4M1636.500 534.5v1.500"/>
<circle cx="1636.500" cy="561" r="5"/><path d="M1634.500 554.5h4M1636.500 554.5v1.500"/>
<circle cx="1636.500" cy="581" r="5"/><path d="M1634.500 574.5h4M1636.500 574.5v1.500"/>
<circle cx="1636.500" cy="643" r="5"/><path d="M1634.500 636.5h4M1636.500 636.5v1.500"/>
<circle cx="1636.500" cy="701" r="5"/><path d="M1634.500 694.5h4M1636.500 694.5v1.500"/>
<circle cx="1636.500" cy="721" r="5"/><path d="M1634.500 714.5h4M1636.500 714.5v1.500"/>
<circle cx="1636.500" cy="741" r="5"/><path d="M1634.500 734.5h4M1636.500 734.5v1.500"/>
<g stroke="#2d8ceb" stroke-width="1.600" transform="translate(0 737.1999999999999)"><path d="M1741.500 4.200a2.600 2.600 0 0 1 -2.300 1.300h-1.400a2.700 2.700 0 0 1 0 -5.400h1.400a2.600 2.600 0 0 1 2.600 2"/><path d="M1741.500 1.400a2.600 2.600 0 0 1 2.300 -1.300h1.400a2.700 2.700 0 0 1 0 5.400h-1.400a2.600 2.600 0 0 1 -2.600 -2"/></g>
<circle cx="1636.500" cy="761" r="5"/><path d="M1634.500 754.5h4M1636.500 754.5v1.500"/>
<circle cx="1636.500" cy="781" r="5"/><path d="M1634.500 774.5h4M1636.500 774.5v1.500"/>
<circle cx="1636.500" cy="801" r="5"/><path d="M1634.500 794.5h4M1636.500 794.5v1.500"/>
<circle cx="1636.500" cy="821" r="5"/><path d="M1634.500 814.5h4M1636.500 814.5v1.500"/>
<path d="M1879 558.5l3.500 3.500l3.500 -3.500" stroke="#c0c0c0"/>
<g transform="translate(1780 552)"><path d="M1.500 13.500l1 -3l6 -6l2 2l-6 6z" stroke="#c0c0c0" stroke-width="1.100"/><path d="M8 3.500l3.500 3.500l2.200 -2.200a2.400 2.400 0 0 0 -3.500 -3.500z" fill="#c0c0c0" stroke="none"/></g>
<path d="M1879 640.5l3.500 3.500l3.500 -3.500" stroke="#c0c0c0"/>
<g transform="translate(1780 634)"><path d="M1.500 13.500l1 -3l6 -6l2 2l-6 6z" stroke="#c0c0c0" stroke-width="1.100"/><path d="M8 3.500l3.500 3.500l2.200 -2.200a2.400 2.400 0 0 0 -3.500 -3.500z" fill="#c0c0c0" stroke="none"/></g>
<path d="M1776 596.500h-6v7h6" stroke="#2d8ceb" stroke-width="2.600"/><path d="M1766 600h6" stroke="#2d8ceb" stroke-width="1.500"/>
<path d="M1805 596.500h-4a3.500 3.500 0 0 0 0 7h4" stroke="#c0c0c0" stroke-width="2.800"/>
<path d="M1834 596.500h-7v7h7" stroke="#c0c0c0" stroke-width="2.800"/>
<path d="M1767.500 616v9.500h9" stroke="#2d8ceb" stroke-width="3.200"/>
<path d="M1796.500 616v6a3.500 3.500 0 0 0 3.500 3.500h5.500" stroke="#c0c0c0" stroke-width="3.200"/>
<path d="M1825.500 616v5l4.500 4.500h5" stroke="#c0c0c0" stroke-width="3.200"/>
<path d="M1623 326c2.500 -4.500 10 -4.500 12.500 0c-2.500 4.500 -10 4.500 -12.500 0z" fill="#d8d8d8" stroke="none"/><circle cx="1629.200" cy="326" r="2.700" fill="#1c1c1c" stroke="none"/><circle cx="1629.200" cy="326" r="1.300" fill="#d8d8d8" stroke="none"/>
<path d="M1623 347c2.500 -4.500 10 -4.500 12.500 0c-2.500 4.500 -10 4.500 -12.500 0z" fill="#d8d8d8" stroke="none"/><circle cx="1629.200" cy="347" r="2.700" fill="#1c1c1c" stroke="none"/><circle cx="1629.200" cy="347" r="1.300" fill="#d8d8d8" stroke="none"/>
<path transform="translate(1653.5 327)" d="M0 -5.500l1.600 3.600l3.900 .4l-2.900 2.700l.8 3.900l-3.400 -2l-3.400 2l.8 -3.900l-2.900 -2.700l3.900 -.4z" fill="#333" stroke="none"/>
<path transform="translate(1677.5 347.5)" d="M0 -5.500l1.600 3.600l3.900 .4l-2.900 2.700l.8 3.900l-3.400 -2l-3.400 2l.8 -3.900l-2.900 -2.700l3.900 -.4z" fill="#d0d0d0" stroke="none"/>
<path d="M1672.500 82.500h8M1672.500 85h8M1672.500 87.500h8" stroke="#d0d0d0" stroke-width="1.100"/>
<path d="M1888 142.500h8M1888 145h8M1888 147.500h8" stroke="#d0d0d0" stroke-width="1.100"/>
<path d="M1888 919.500h8M1888 922h8M1888 924.500h8" stroke="#d0d0d0" stroke-width="1.100"/>
<g fill="#c8c8c8" stroke="none"><rect x="1654" y="107" width="2" height="9.500"/><path d="M1666 107v9.500l-9 -4.750z"/><path d="M1685.500 107v9.500l-9 -4.750z"/><rect x="1687" y="107" width="2" height="9.500"/><path d="M1703 106.500v10.500l9.500 -5.250z"/><rect x="1726" y="107" width="2" height="9.500"/><path d="M1729.500 107v9.500l9 -4.750z"/><path d="M1750 107v9.500l9 -4.750z"/><rect x="1760" y="107" width="2" height="9.500"/></g>
<g stroke="#2d8ceb" stroke-width="1.400"><circle cx="1627.500" cy="945" r="3.500"/><path d="M1625 947.500l-4.500 4.500"/></g><path d="M1630.500 948.500h5l-2.500 2.500z" fill="#2d8ceb" stroke="none"/>
<path d="M1889.500 943.500l7 7M1896.500 943.500l-7 7" stroke="#e0e0e0" stroke-width="1.500"/>
<path d="M1614 966l3.500 3.500l3.500 -3.500" stroke="#b0b0b0"/>
<g fill="#c8c8c8" stroke="none"><rect x="1642" y="982" width="12" height="9" rx="1"/><rect x="1643" y="979.5" width="4" height="3" rx="1"/><rect x="1649" y="979.5" width="4" height="3" rx="1"/></g>
<g fill="#c8c8c8" stroke="none"><rect x="1642" y="999" width="12" height="9" rx="1"/><rect x="1643" y="996.5" width="4" height="3" rx="1"/><rect x="1649" y="996.5" width="4" height="3" rx="1"/></g>
<g fill="#c8c8c8" stroke="none"><rect x="1642" y="1016" width="12" height="9" rx="1"/><rect x="1643" y="1013.5" width="4" height="3" rx="1"/><rect x="1649" y="1013.5" width="4" height="3" rx="1"/></g>
</svg>
<div class="t" style="left:1620px;top:77px;color:#d0d0d0">Preview</div>
<div class="t" style="left:1620px;top:137px;color:#d0d0d0">Properties: Shape Layer 1</div>
<div class="t" style="left:1619px;top:161px;font-weight:bold;color:#a8a8a8;letter-spacing:-0.3px">Layer Transform</div>
<div class="t b" style="left:1760px;top:161px">Reset</div>
<div class="t" style="left:1667px;top:181px">Anchor Point</div>
<div class="t b" style="left:1759px;top:180px">115</div>
<div class="t b" style="left:1809px;top:180px">33</div>
<div class="t" style="left:1667px;top:201px">Position</div>
<div class="t b" style="left:1759px;top:200px">960</div>
<div class="t b" style="left:1809px;top:200px">540</div>
<div class="t" style="left:1667px;top:221px">Scale</div>
<div class="t b" style="left:1759px;top:220px">100<span style="color:#c4c4c4;margin-left:2px">%</span></div>
<div class="t b" style="left:1809px;top:220px">100<span style="color:#c4c4c4;margin-left:2px">%</span></div>
<div class="t" style="left:1667px;top:241px">Rotation</div>
<div class="t b" style="left:1759px;top:240px">0<span style="color:#c4c4c4;margin:0 1px 0 2px">x</span>+0<span style="color:#c4c4c4;margin-left:2px">°</span></div>
<div class="t" style="left:1667px;top:261px">Opacity</div>
<div class="t b" style="left:1759px;top:260px">100<span style="color:#c4c4c4;margin-left:2px">%</span></div>
<div class="t" style="left:1619px;top:293px;font-weight:bold;color:#a8a8a8;letter-spacing:-0.3px">Layer Contents</div>
<div class="t" style="left:1667px;top:320px;color:#1c1c1c">Shape Layer 1</div>
<div class="t" style="left:1691px;top:340px;color:#b4b4b4">Rectangle 1</div>
<div class="t" style="left:1619px;top:487px;font-weight:bold;color:#a8a8a8;letter-spacing:-0.3px">Shape Properties</div>
<div class="t b" style="left:1760px;top:487px">Reset</div>
<div class="t" style="left:1667px;top:513px">Size</div>
<div class="t b" style="left:1759px;top:512px">1014</div>
<div class="t b" style="left:1809px;top:512px">518</div>
<div class="t" style="left:1667px;top:533px">Roundness</div>
<div class="t b" style="left:1759px;top:532px">46</div>
<div class="t" style="left:1667px;top:553px">Stroke Color</div>
<div class="t" style="left:1667px;top:573px">Stroke Width</div>
<div class="t b" style="left:1759px;top:572px">0</div>
<div class="t" style="left:1667px;top:593px">Line Cap</div>
<div class="t" style="left:1667px;top:614px">Line Join</div>
<div class="t" style="left:1667px;top:635px">Fill Color</div>
<div class="t" style="left:1619px;top:667px;font-weight:bold;color:#a8a8a8;letter-spacing:-0.3px">Shape Transform</div>
<div class="t b" style="left:1760px;top:667px">Reset</div>
<div class="t" style="left:1667px;top:693px">Anchor Point</div>
<div class="t b" style="left:1759px;top:692px">0</div>
<div class="t b" style="left:1809px;top:692px">0</div>
<div class="t" style="left:1667px;top:713px">Position</div>
<div class="t b" style="left:1759px;top:712px">115</div>
<div class="t b" style="left:1809px;top:712px">33</div>
<div class="t" style="left:1667px;top:733px">Scale</div>
<div class="t b" style="left:1759px;top:732px">100<span style="color:#c4c4c4;margin-left:2px">%</span></div>
<div class="t b" style="left:1809px;top:732px">100<span style="color:#c4c4c4;margin-left:2px">%</span></div>
<div class="t" style="left:1667px;top:753px">Skew</div>
<div class="t b" style="left:1759px;top:752px">0</div>
<div class="t" style="left:1667px;top:773px">Skew Axis</div>
<div class="t b" style="left:1759px;top:772px">0<span style="color:#c4c4c4;margin:0 1px 0 2px">x</span>+0<span style="color:#c4c4c4;margin-left:2px">°</span></div>
<div class="t" style="left:1667px;top:793px">Rotation</div>
<div class="t b" style="left:1759px;top:792px">0<span style="color:#c4c4c4;margin:0 1px 0 2px">x</span>+0<span style="color:#c4c4c4;margin-left:2px">°</span></div>
<div class="t" style="left:1667px;top:813px">Opacity</div>
<div class="t b" style="left:1759px;top:812px">100<span style="color:#c4c4c4;margin-left:2px">%</span></div>
<div class="t" style="left:1620px;top:854px;color:#b8b8b8">Align</div>
<div class="t" style="left:1620px;top:884px;color:#b8b8b8">Audio</div>
<div class="t" style="left:1620px;top:914px;color:#d8d8d8">Effects &amp; Presets</div>
<div class="t" style="left:1624px;top:961px">Generate</div>
<div class="t" style="left:1661px;top:978px">CC Light Burst 2.5</div>
<div class="t" style="left:1661px;top:995px">CC Light Rays</div>
<div class="t" style="left:1661px;top:1012px;color:#1c1c1c">CC Light Sweep</div>
<div class="t w" style="left:1809px;top:553px">Solid Color</div>
<div class="t w" style="left:1809px;top:635px">Solid Color</div>
<div class="t" style="left:1643px;top:980px;font-size:8px;font-weight:bold;color:#232323;letter-spacing:-0.5px">32</div>
<div class="t" style="left:1643px;top:997px;font-size:8px;font-weight:bold;color:#232323;letter-spacing:-0.5px">32</div>
<div class="t" style="left:1643px;top:1014px;font-size:8px;font-weight:bold;color:#232323;letter-spacing:-0.5px">32</div>

<div class="a" style="left:535px;top:732px;width:147px;height:20px;background:#fdfdfd;border-radius:3px;box-shadow:1px 1px 3px rgba(0,0,0,.6)"></div>
<div class="t" style="left:541px;top:735px;font-size:11.850px;color:#444">Toggle Transparency Grid</div>
<div class="a" id="edge-strip" style="left:0;top:70px;width:1px;height:960px;background:#1a1a1a"></div>
<div class="a" style="left:303px;top:707px;width:1px;height:17px;background:#181818"></div>
<div class="a" id="menuline" style="left:0;top:42px;width:1920px;height:1px;background:#ededed"></div>

</body>
</html>
